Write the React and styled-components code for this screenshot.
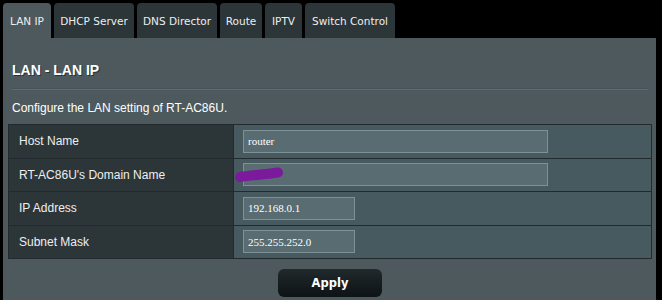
import styled, { createGlobalStyle } from 'styled-components';

const GlobalStyle = createGlobalStyle`
  html, body {
    margin: 0;
    padding: 0;
    background: #000;
  }
`;

const tabs = [
  { label: 'LAN IP', width: 48, active: true },
  { label: 'DHCP Server', width: 80 },
  { label: 'DNS Director', width: 80 },
  { label: 'Route', width: 42 },
  { label: 'IPTV', width: 37 },
  { label: 'Switch Control', width: 90 },
];

const rows = [
  { label: 'Host Name', value: 'router', wide: true },
  { label: "RT-AC86U's Domain Name", value: '', wide: true, scribble: true },
  { label: 'IP Address', value: '192.168.0.1' },
  { label: 'Subnet Mask', value: '255.255.252.0' },
];

const App = () => {
  return (
    <>
      <GlobalStyle />
      <Page>
        <TabBar>
          {tabs.map((t) => (
            <Tab key={t.label} $width={t.width} $active={t.active}>
              {t.label}
            </Tab>
          ))}
        </TabBar>
        <Panel>
          <Header>
            <Title>LAN - LAN IP</Title>
            <Divider />
            <Description>Configure the LAN setting of RT-AC86U.</Description>
          </Header>
          <Table>
            {rows.map((r) => (
              <Row key={r.label}>
                <Label>{r.label}</Label>
                <Cell>
                  <Field $wide={r.wide}>{r.value}</Field>
                  {r.scribble && (
                    <Scribble width="50" height="18" viewBox="0 0 50 18">
                      <path
                        d="M6 12 C 16 10.5, 30 9.5, 44 7.5"
                        stroke="#7b1a9c"
                        strokeWidth="10"
                        strokeLinecap="round"
                        fill="none"
                      />
                    </Scribble>
                  )}
                </Cell>
              </Row>
            ))}
          </Table>
          <ButtonRow>
            <ApplyButton>Apply</ApplyButton>
          </ButtonRow>
        </Panel>
      </Page>
    </>
  );
};

const Page = styled.div`
  width: 662px;
  height: 300px;
  overflow: hidden;
  background: #000;
`;

const TabBar = styled.div`
  display: flex;
  gap: 3px;
  padding: 3px 0 0 3px;
  height: 35px;
`;

const Tab = styled.div`
  width: ${(p) => p.$width}px;
  height: 35px;
  display: flex;
  align-items: center;
  justify-content: center;
  border-radius: 4px 4px 0 0;
  background: ${(p) => (p.$active ? '#4d595d' : '#2c3538')};
  color: #eceeee;
  font-family: 'DejaVu Sans', Verdana, sans-serif;
  font-size: 10.5px;
  white-space: nowrap;
`;

const Panel = styled.div`
  width: 653px;
  height: 262px;
  margin-left: 3px;
  background: #4d595d;
  padding: 0 4px 0 5px;
  box-sizing: border-box;
`;

const Header = styled.div`
  padding: 22px 4px 0 4px;
`;

const Title = styled.div`
  font-family: 'Liberation Sans', Arial, sans-serif;
  font-weight: bold;
  font-size: 14px;
  line-height: 20px;
  color: #fff;
  text-shadow: 1px 1px 0 #2b3336;
`;

const Divider = styled.div`
  margin-top: 8px;
  height: 1px;
  background: #5e6c71;
  border-top: 1px solid #46535a;
`;

const Description = styled.div`
  margin-top: 10px;
  font-family: 'Liberation Sans', Arial, sans-serif;
  font-size: 12px;
  line-height: 16px;
  color: #fff;
`;

const Table = styled.div`
  margin-top: 8px;
  border: 1px solid #222a2d;
  display: flex;
  flex-direction: column;
`;

const Row = styled.div`
  display: grid;
  grid-template-columns: 225px 1fr;
  height: 32.5px;
  border-top: 1px solid #222a2d;
  &:first-child {
    border-top: none;
  }
`;

const Label = styled.div`
  background: #2c3639;
  border-right: 1px solid #222a2d;
  display: flex;
  align-items: center;
  padding-left: 10px;
  font-family: 'Liberation Sans', Arial, sans-serif;
  font-size: 12px;
  color: #ecefef;
`;

const Cell = styled.div`
  position: relative;
  background: #475a5f;
  display: flex;
  align-items: center;
  padding-left: 9px;
`;

const Field = styled.div`
  width: ${(p) => (p.$wide ? 299 : 106)}px;
  height: 21px;
  background: #596c71;
  border: 1px solid #7d9196;
  display: flex;
  align-items: center;
  padding-left: 4px;
  font-family: 'Liberation Serif', 'Times New Roman', serif;
  font-size: 11px;
  color: #fff;
`;

const Scribble = styled.svg`
  position: absolute;
  left: 0;
  top: 6px;
`;

const ButtonRow = styled.div`
  display: flex;
  justify-content: center;
  margin-top: 10px;
`;

const ApplyButton = styled.div`
  width: 104px;
  height: 28px;
  border-radius: 6px;
  background: linear-gradient(#20292c, #0e1315);
  display: flex;
  align-items: center;
  justify-content: center;
  font-family: 'DejaVu Sans', Verdana, sans-serif;
  font-weight: bold;
  font-size: 11.5px;
  color: #fff;
`;

export default App;
